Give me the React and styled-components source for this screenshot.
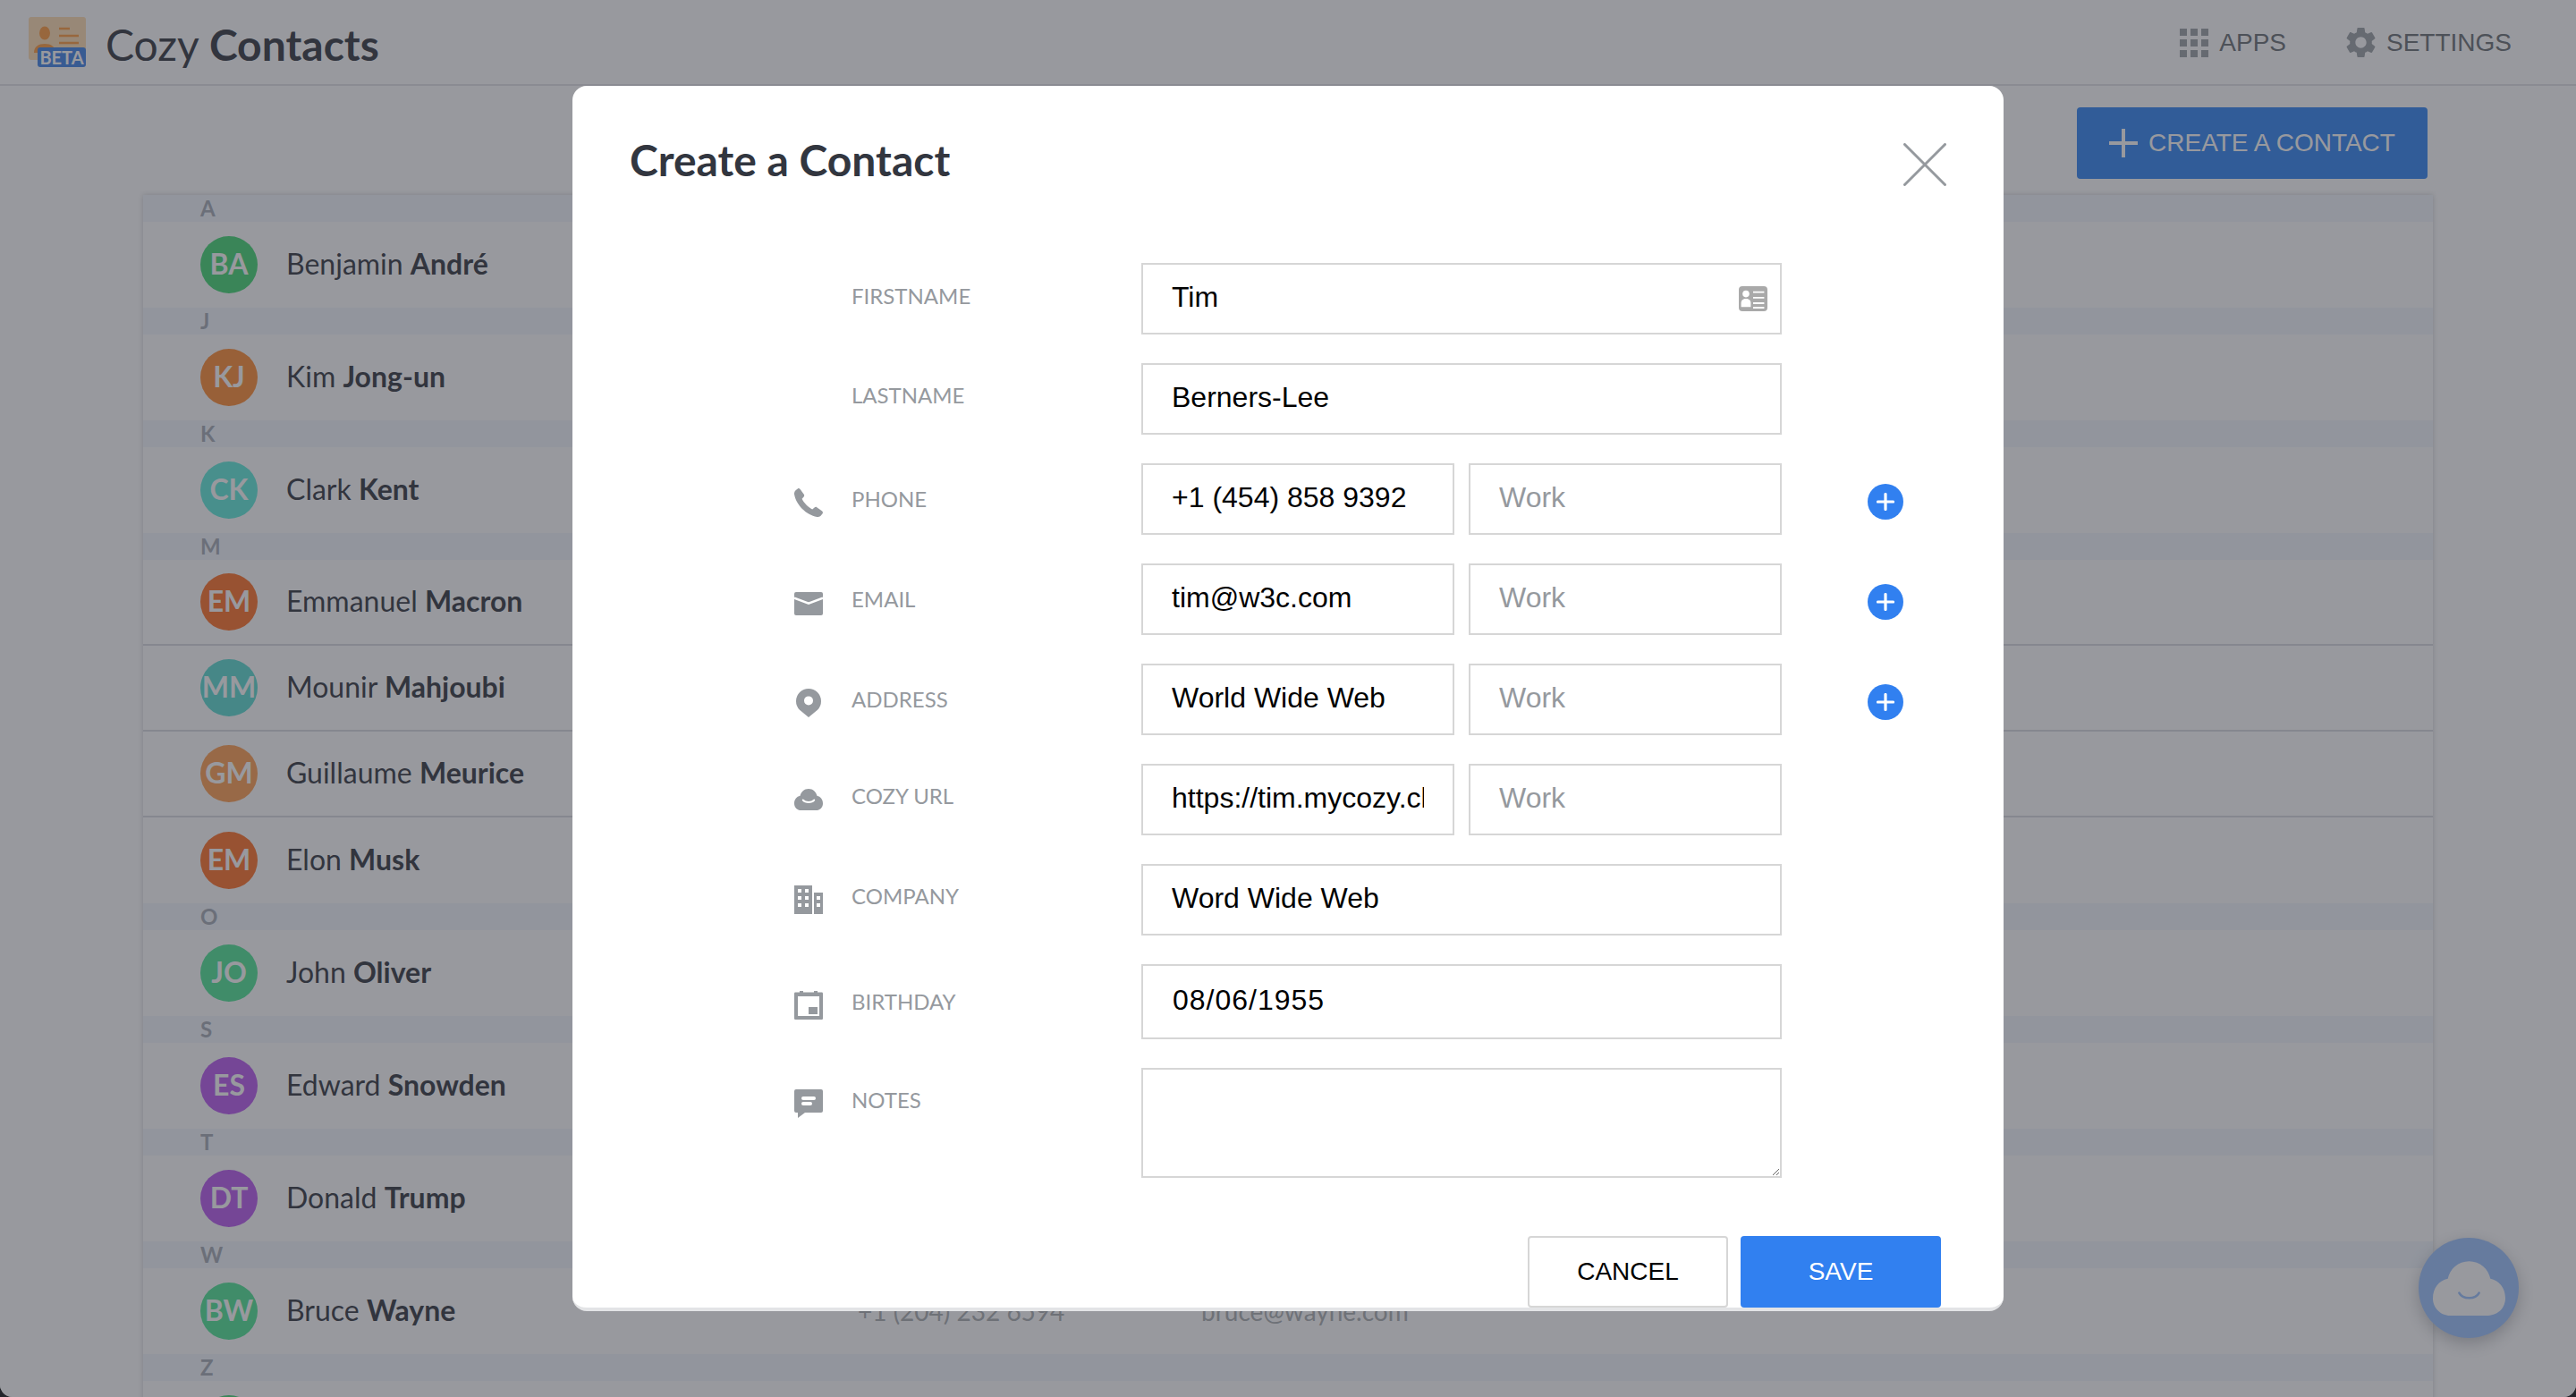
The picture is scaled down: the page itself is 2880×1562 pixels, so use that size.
import React from "react";
import styled, { createGlobalStyle } from "styled-components";
import { MdSettings } from "react-icons/md";

const Global = createGlobalStyle`
  html, body {
    margin: 0;
    padding: 0;
    height: 100%;
    overflow: hidden;
    background: #23252b;
  }
  body {
    font-family: "Lato", "Liberation Sans", sans-serif;
    color: #32363f;
  }
  * { box-sizing: border-box; }
`;

const Page = styled.div`
  position: relative;
  width: 2880px;
  height: 1562px;
  background: #fff;
  overflow: hidden;
  border-radius: 0 0 14px 14px;
`;

const Header = styled.header`
  display: flex;
  align-items: center;
  justify-content: space-between;
  height: 96px;
  padding: 0 72px 2px 32px;
  border-bottom: 2px solid #e2e2e7;
`;

const Brand = styled.div`
  display: flex;
  align-items: center;
  gap: 22px;
`;

const LogoWrap = styled.div`
  position: relative;
  width: 64px;
  height: 56px;
  margin-top: 2px;
`;

const BetaBadge = styled.span`
  position: absolute;
  right: 0;
  bottom: 0;
  width: 54px;
  height: 22px;
  border-radius: 3px;
  background: #3f82e6;
  color: #fff;
  font-size: 20px;
  font-weight: 700;
  line-height: 23px;
  text-align: center;
`;

const AppTitle = styled.h1`
  margin: 7px 0 0;
  font-size: 48px;
  font-weight: 400;
  line-height: 60px;
  b { font-weight: 700; }
`;

const Nav = styled.nav`
  display: flex;
  align-items: center;
  gap: 68px;
  margin-top: 3px;
`;

const NavItem = styled.div`
  display: flex;
  align-items: center;
  gap: 12px;
  font-family: "Liberation Sans", sans-serif;
  font-size: 28px;
  color: #686e73;
  svg { color: #9aa0a5; fill: currentColor; display: block; }
`;

const Toolbar = styled.div`
  display: flex;
  justify-content: flex-end;
  padding: 24px 166px 18px 0;
`;

const PrimaryButton = styled.button`
  display: flex;
  align-items: center;
  justify-content: center;
  gap: 12px;
  width: 392px;
  height: 80px;
  border: 0;
  border-radius: 4px;
  background: #3084f2;
  color: #fff;
  font-family: "Liberation Sans", sans-serif;
  font-size: 28px;
`;

const ContactList = styled.section`
  width: 2560px;
  margin-left: 160px;
  box-shadow: 0 0 6px rgba(50, 54, 63, 0.25);
`;

const LetterBand = styled.div`
  height: 30px;
  padding-left: 64px;
  background: #f2f7fd;
  color: #a5abb5;
  font-size: 24px;
  font-weight: 700;
  line-height: 30px;
`;

const Row = styled.div`
  display: flex;
  align-items: center;
  height: 96px;
  padding-left: 64px;
  border-bottom: ${(p) => (p.$line ? "2px solid #d8dae0" : "0")};
`;

const Avatar = styled.div`
  flex: none;
  width: 64px;
  height: 64px;
  border-radius: 50%;
  background: ${(p) => p.$color};
  color: #fff;
  font-size: 32px;
  font-weight: 700;
  line-height: 62px;
  text-align: center;
`;

const Name = styled.div`
  flex: none;
  width: 639px;
  margin-left: 32px;
  padding-bottom: 3px;
  font-size: 32px;
  b { font-weight: 700; }
`;

const Cell = styled.div`
  flex: none;
  width: ${(p) => p.$w}px;
  font-size: 28px;
  color: #aaaeb1;
`;

const Bubble = styled.div`
  position: absolute;
  right: 64px;
  bottom: 66px;
  display: flex;
  align-items: center;
  justify-content: center;
  width: 112px;
  height: 112px;
  border-radius: 50%;
  background: #9ac2ff;
  box-shadow: 0 6px 18px rgba(50, 54, 63, 0.3);
`;

const Overlay = styled.div`
  position: absolute;
  inset: 0;
  display: flex;
  justify-content: center;
  padding-top: 96px;
  background: rgba(50, 52, 61, 0.5);
`;

const Modal = styled.div`
  width: 1600px;
  height: 1370px;
  background: #fff;
  border-bottom: 4px solid #e3e4e6;
  border-radius: 16px;
  overflow: hidden;
`;

const ModalHead = styled.div`
  display: flex;
  justify-content: space-between;
  align-items: flex-start;
  height: 198px;
  padding: 51px 64px 0;
`;

const ModalTitle = styled.h2`
  margin: 0;
  font-size: 48px;
  font-weight: 700;
  line-height: 64px;
`;

const CloseIcon = styled.svg`
  display: block;
  margin-top: 13px;
`;

const Form = styled.form`
  display: flex;
  flex-direction: column;
  gap: 32px;
  padding-left: 248px;
`;

const FormRow = styled.div`
  display: grid;
  grid-template-columns: 64px 324px 716px 96px 40px;
  align-items: start;
`;

const IconSlot = styled.div`
  margin-top: ${(p) => p.$top}px;
  height: 32px;
  svg { display: block; fill: #95999e; }
`;

const FieldLabel = styled.label`
  margin-top: ${(p) => p.$top}px;
  font-size: 24px;
  line-height: 30px;
  color: #95999e;
`;

const Fields = styled.div`
  position: relative;
  display: flex;
  gap: 16px;
`;

const Input = styled.input`
  flex: 1 1 0;
  min-width: 0;
  height: ${(p) => p.$h || 80}px;
  padding: 0 32px 3px;
  padding-left: ${(p) => (p.$spaced ? 33 : 32)}px;
  border: 2px solid #d6d6d6;
  border-radius: 0;
  outline: 0;
  background: #fff;
  color: #000;
  font-family: "Liberation Sans", sans-serif;
  font-size: 32px;
  letter-spacing: ${(p) => p.$spaced || 0}px;
  &::placeholder { color: #95999e; opacity: 1; }
`;

const Notes = styled.textarea`
  display: block;
  width: 100%;
  height: 123px;
  border: 2px solid #d6d6d6;
  border-radius: 0;
  outline: 0;
  background: #fff;
`;

const CardIcon = styled.svg`
  position: absolute;
  top: 26px;
  right: 16px;
`;

const AddButton = styled.button`
  display: flex;
  align-items: center;
  justify-content: center;
  width: 40px;
  height: 40px;
  margin-top: 23px;
  padding: 0;
  border: 0;
  border-radius: 50%;
  background: #3180f0;
`;

const Footer = styled.div`
  display: flex;
  justify-content: flex-end;
  gap: 14px;
  margin-top: 65px;
  padding-right: 70px;
`;

const FooterButton = styled.button`
  width: 224px;
  height: 80px;
  border: ${(p) => (p.$primary ? "0" : "2px solid #d6d6d6")};
  border-radius: 4px;
  background: ${(p) => (p.$primary ? "#3180f0" : "#fff")};
  color: ${(p) => (p.$primary ? "#fff" : "#000")};
  font-family: "Liberation Sans", sans-serif;
  font-size: 28px;
`;

const cloudPath =
  "M3.800 12C1.700 12 0 10.300 0 8.200 0 6 1.300 4.300 3.300 3.900 3.700 1.700 5.600 0 8 0s4.300 1.700 4.700 3.900c2 .4 3.300 2.100 3.300 4.300 0 2.100-1.700 3.800-3.800 3.800z";

const Logo = () => (
  <LogoWrap>
    <svg width="64" height="48" viewBox="0 0 64 48">
      <rect width="64" height="48" rx="3" fill="#ffdcb0" />
      <ellipse cx="18" cy="18" rx="6" ry="7.500" fill="#ff9a3c" />
      <path d="M6 40c0-7 5-10 12-10s12 3 12 10z" fill="#ff9a3c" />
      <path d="M34 13h12M34 21h22M34 29h22M34 37h22" stroke="#ff9a3c" strokeWidth="2.500" />
    </svg>
    <BetaBadge>BETA</BetaBadge>
  </LogoWrap>
);

const AppsIcon = () => (
  <svg width="32" height="32" viewBox="0 0 32 32">
    {[0, 12, 24].map((y) =>
      [0, 12, 24].map((x) => <rect key={x + "-" + y} x={x} y={y} width="8" height="8" />)
    )}
  </svg>
);

const Icon = ({ children }) => (
  <svg width="32" height="32" viewBox="0 0 16 16">
    {children}
  </svg>
);

const icons = {
  phone: (
    <Icon>
      <path d="M3.200.4 5.400 3.400c.3.400.2 1-.1 1.300L4.300 5.900c1.100 2.300 3.500 4.700 5.800 5.800l1.200-1c.3-.3.900-.4 1.300-.1l3 2.200c.4.300.5.900.2 1.300l-.8 1c-.6.700-1.400 1-2.300.9C6.700 15 1 9.300 0 3.300-.1 2.400.2 1.600.9 1L1.900.2c.4-.3 1-.2 1.300.2z" />
    </Icon>
  ),
  email: (
    <Icon>
      <rect y="1.500" width="16" height="13" rx="1" />
      <path d="M0 4.800 8 7.800l8-3" fill="none" stroke="#fff" strokeWidth="1.300" />
    </Icon>
  ),
  address: (
    <Icon>
      <path fillRule="evenodd" d="M8 16 3 11.900A7 7 0 1 1 13 11.900zM8 4.200a2.500 2.500 0 1 0 0 5 2.500 2.500 0 0 0 0-5z" />
    </Icon>
  ),
  cozy: (
    <svg width="32" height="32" viewBox="0 -2 16 16">
      <path d={cloudPath} />
      <path d="M4.900 6.300c1.300 1.600 4.900 1.600 6.200 0" fill="none" stroke="#fff" strokeWidth="1" strokeLinecap="round" />
    </svg>
  ),
  company: (
    <Icon>
      <path d="M0 0h10v16H0zM11 4h5v12h-5z" />
      <path fill="#fff" d="M2 2h2v2H2zM6 2h2v2H6zM2 6h2v2H2zM6 6h2v2H6zM2 10h2v2H2zM6 10h2v2H6zM12.500 6h2v2h-2zM12.500 10h2v2h-2z" />
    </Icon>
  ),
  birthday: (
    <Icon>
      <path d="M3 0h2v1H3zM11 0h2v1h-2z" />
      <rect y=".8" width="16" height="15.200" rx=".6" />
      <rect x="2" y="3" width="12" height="11" fill="#fff" />
      <rect x="8" y="9" width="5" height="4" />
    </Icon>
  ),
  notes: (
    <Icon>
      <path d="M1 0h14a1 1 0 0 1 1 1v11a1 1 0 0 1-1 1H6l-4 3v-3H1a1 1 0 0 1-1-1V1a1 1 0 0 1 1-1z" />
      <rect x="4" y="4" width="8" height="2" rx="1" fill="#fff" />
      <rect x="4" y="7" width="6" height="2" rx="1" fill="#fff" />
    </Icon>
  ),
};

const PlusMark = () => (
  <svg width="20" height="20" viewBox="0 0 20 20">
    <path d="M10 1.500v17M1.500 10h17" stroke="#fff" strokeWidth="3.200" strokeLinecap="round" />
  </svg>
);

const contacts = [
  { letter: "A" },
  { first: "Benjamin", last: "André", initials: "BA", color: "#42d673" },
  { letter: "J" },
  { first: "Kim", last: "Jong-un", initials: "KJ", color: "#ff8c33" },
  { letter: "K" },
  { first: "Clark", last: "Kent", initials: "CK", color: "#5feada" },
  { letter: "M" },
  { first: "Emmanuel", last: "Macron", initials: "EM", color: "#ff7027", line: true },
  { first: "Mounir", last: "Mahjoubi", initials: "MM", color: "#5adad1", line: true },
  { first: "Guillaume", last: "Meurice", initials: "GM", color: "#ff9f50", line: true },
  { first: "Elon", last: "Musk", initials: "EM", color: "#ff7027" },
  { letter: "O" },
  { first: "John", last: "Oliver", initials: "JO", color: "#4ee495" },
  { letter: "S" },
  { first: "Edward", last: "Snowden", initials: "ES", color: "#b858ef" },
  { letter: "T" },
  { first: "Donald", last: "Trump", initials: "DT", color: "#b858ef" },
  { letter: "W" },
  { first: "Bruce", last: "Wayne", initials: "BW", color: "#4ee495", phone: "+1 (204) 232 6594", email: "bruce@wayne.com" },
  { letter: "Z" },
  { first: "", last: "", initials: "", color: "#42d673" },
];

const fields = [
  { label: "FIRSTNAME", iconTop: 0, labelTop: 22, value: "Tim", card: true },
  { label: "LASTNAME", iconTop: 0, labelTop: 21, value: "Berners-Lee" },
  { icon: "phone", label: "PHONE", iconTop: 28, labelTop: 25, value: "+1 (454) 858 9392", work: true, add: true },
  { icon: "email", label: "EMAIL", iconTop: 29, labelTop: 25, value: "tim@w3c.com", work: true, add: true },
  { icon: "address", label: "ADDRESS", iconTop: 28, labelTop: 25, value: "World Wide Web", work: true, add: true },
  { icon: "cozy", label: "COZY URL", iconTop: 24, labelTop: 21, value: "https://tim.mycozy.cloud", work: true },
  { icon: "company", label: "COMPANY", iconTop: 24, labelTop: 21, value: "Word Wide Web" },
  { icon: "birthday", label: "BIRTHDAY", iconTop: 30, labelTop: 27, value: "08/06/1955", height: 84, spaced: 1 },
];

function App() {
  return (
    <>
      <Global />
      <Page>
        <Header>
          <Brand>
            <Logo />
            <AppTitle>
              Cozy <b>Contacts</b>
            </AppTitle>
          </Brand>
          <Nav>
            <NavItem>
              <AppsIcon />
              APPS
            </NavItem>
            <NavItem>
              <MdSettings size={41} style={{ margin: "0 -4.500px" }} />
              SETTINGS
            </NavItem>
          </Nav>
        </Header>
        <Toolbar>
          <PrimaryButton>
            <svg width="32" height="32" viewBox="0 0 32 32">
              <path d="M16 0v32M0 16h32" stroke="#fff" strokeWidth="4" />
            </svg>
            CREATE A CONTACT
          </PrimaryButton>
        </Toolbar>
        <ContactList>
          {contacts.map((c, i) =>
            c.letter ? (
              <LetterBand key={i}>{c.letter}</LetterBand>
            ) : (
              <Row key={i} $line={c.line}>
                <Avatar $color={c.color}>{c.initials}</Avatar>
                <Name>
                  {c.first} <b>{c.last}</b>
                </Name>
                <Cell $w={384}>{c.phone}</Cell>
                <Cell $w={400}>{c.email}</Cell>
              </Row>
            )
          )}
        </ContactList>
        <Bubble>
          <svg width="81" height="61" viewBox="0 0 16 12">
            <path fill="#fff" d={cloudPath} />
            <path d="M5.800 7c.8 1.500 3.600 1.500 4.400 0" fill="none" stroke="#9ac2ff" strokeWidth=".5" strokeLinecap="round" />
          </svg>
        </Bubble>
        <Overlay>
          <Modal>
            <ModalHead>
              <ModalTitle>Create a Contact</ModalTitle>
              <CloseIcon width="48" height="48" viewBox="0 0 48 48">
                <path d="M1.500 1.500l45 45M46.500 1.500l-45 45" stroke="#95999e" strokeWidth="3" strokeLinecap="round" />
              </CloseIcon>
            </ModalHead>
            <Form>
              {fields.map((f) => (
                <FormRow key={f.label}>
                  <IconSlot $top={f.iconTop}>{icons[f.icon]}</IconSlot>
                  <FieldLabel $top={f.labelTop}>{f.label}</FieldLabel>
                  <Fields>
                    <Input defaultValue={f.value} $h={f.height} $spaced={f.spaced} />
                    {f.work && <Input placeholder="Work" />}
                    {f.card && (
                      <CardIcon width="32" height="28" viewBox="0 0 16 14">
                        <rect width="16" height="14" rx="2" fill="#a9a9a9" />
                        <circle cx="4" cy="4.300" r="1.900" fill="#fff" />
                        <path d="M1.300 11.600V9.400C1.300 7.800 2.500 7 4 7s2.700.8 2.700 2.400v2.200z" fill="#fff" />
                        <path d="M8 3.300h6.200M8 6.400h6.200M8 9.500h6.200M8 12h6.200" stroke="#fff" strokeWidth=".9" />
                      </CardIcon>
                    )}
                  </Fields>
                  <span />
                  {f.add && (
                    <AddButton type="button">
                      <PlusMark />
                    </AddButton>
                  )}
                </FormRow>
              ))}
              <FormRow>
                <IconSlot $top={24}>{icons.notes}</IconSlot>
                <FieldLabel $top={21}>NOTES</FieldLabel>
                <Notes />
              </FormRow>
            </Form>
            <Footer>
              <FooterButton type="button">CANCEL</FooterButton>
              <FooterButton type="button" $primary>
                SAVE
              </FooterButton>
            </Footer>
          </Modal>
        </Overlay>
      </Page>
    </>
  );
}

export default App;
